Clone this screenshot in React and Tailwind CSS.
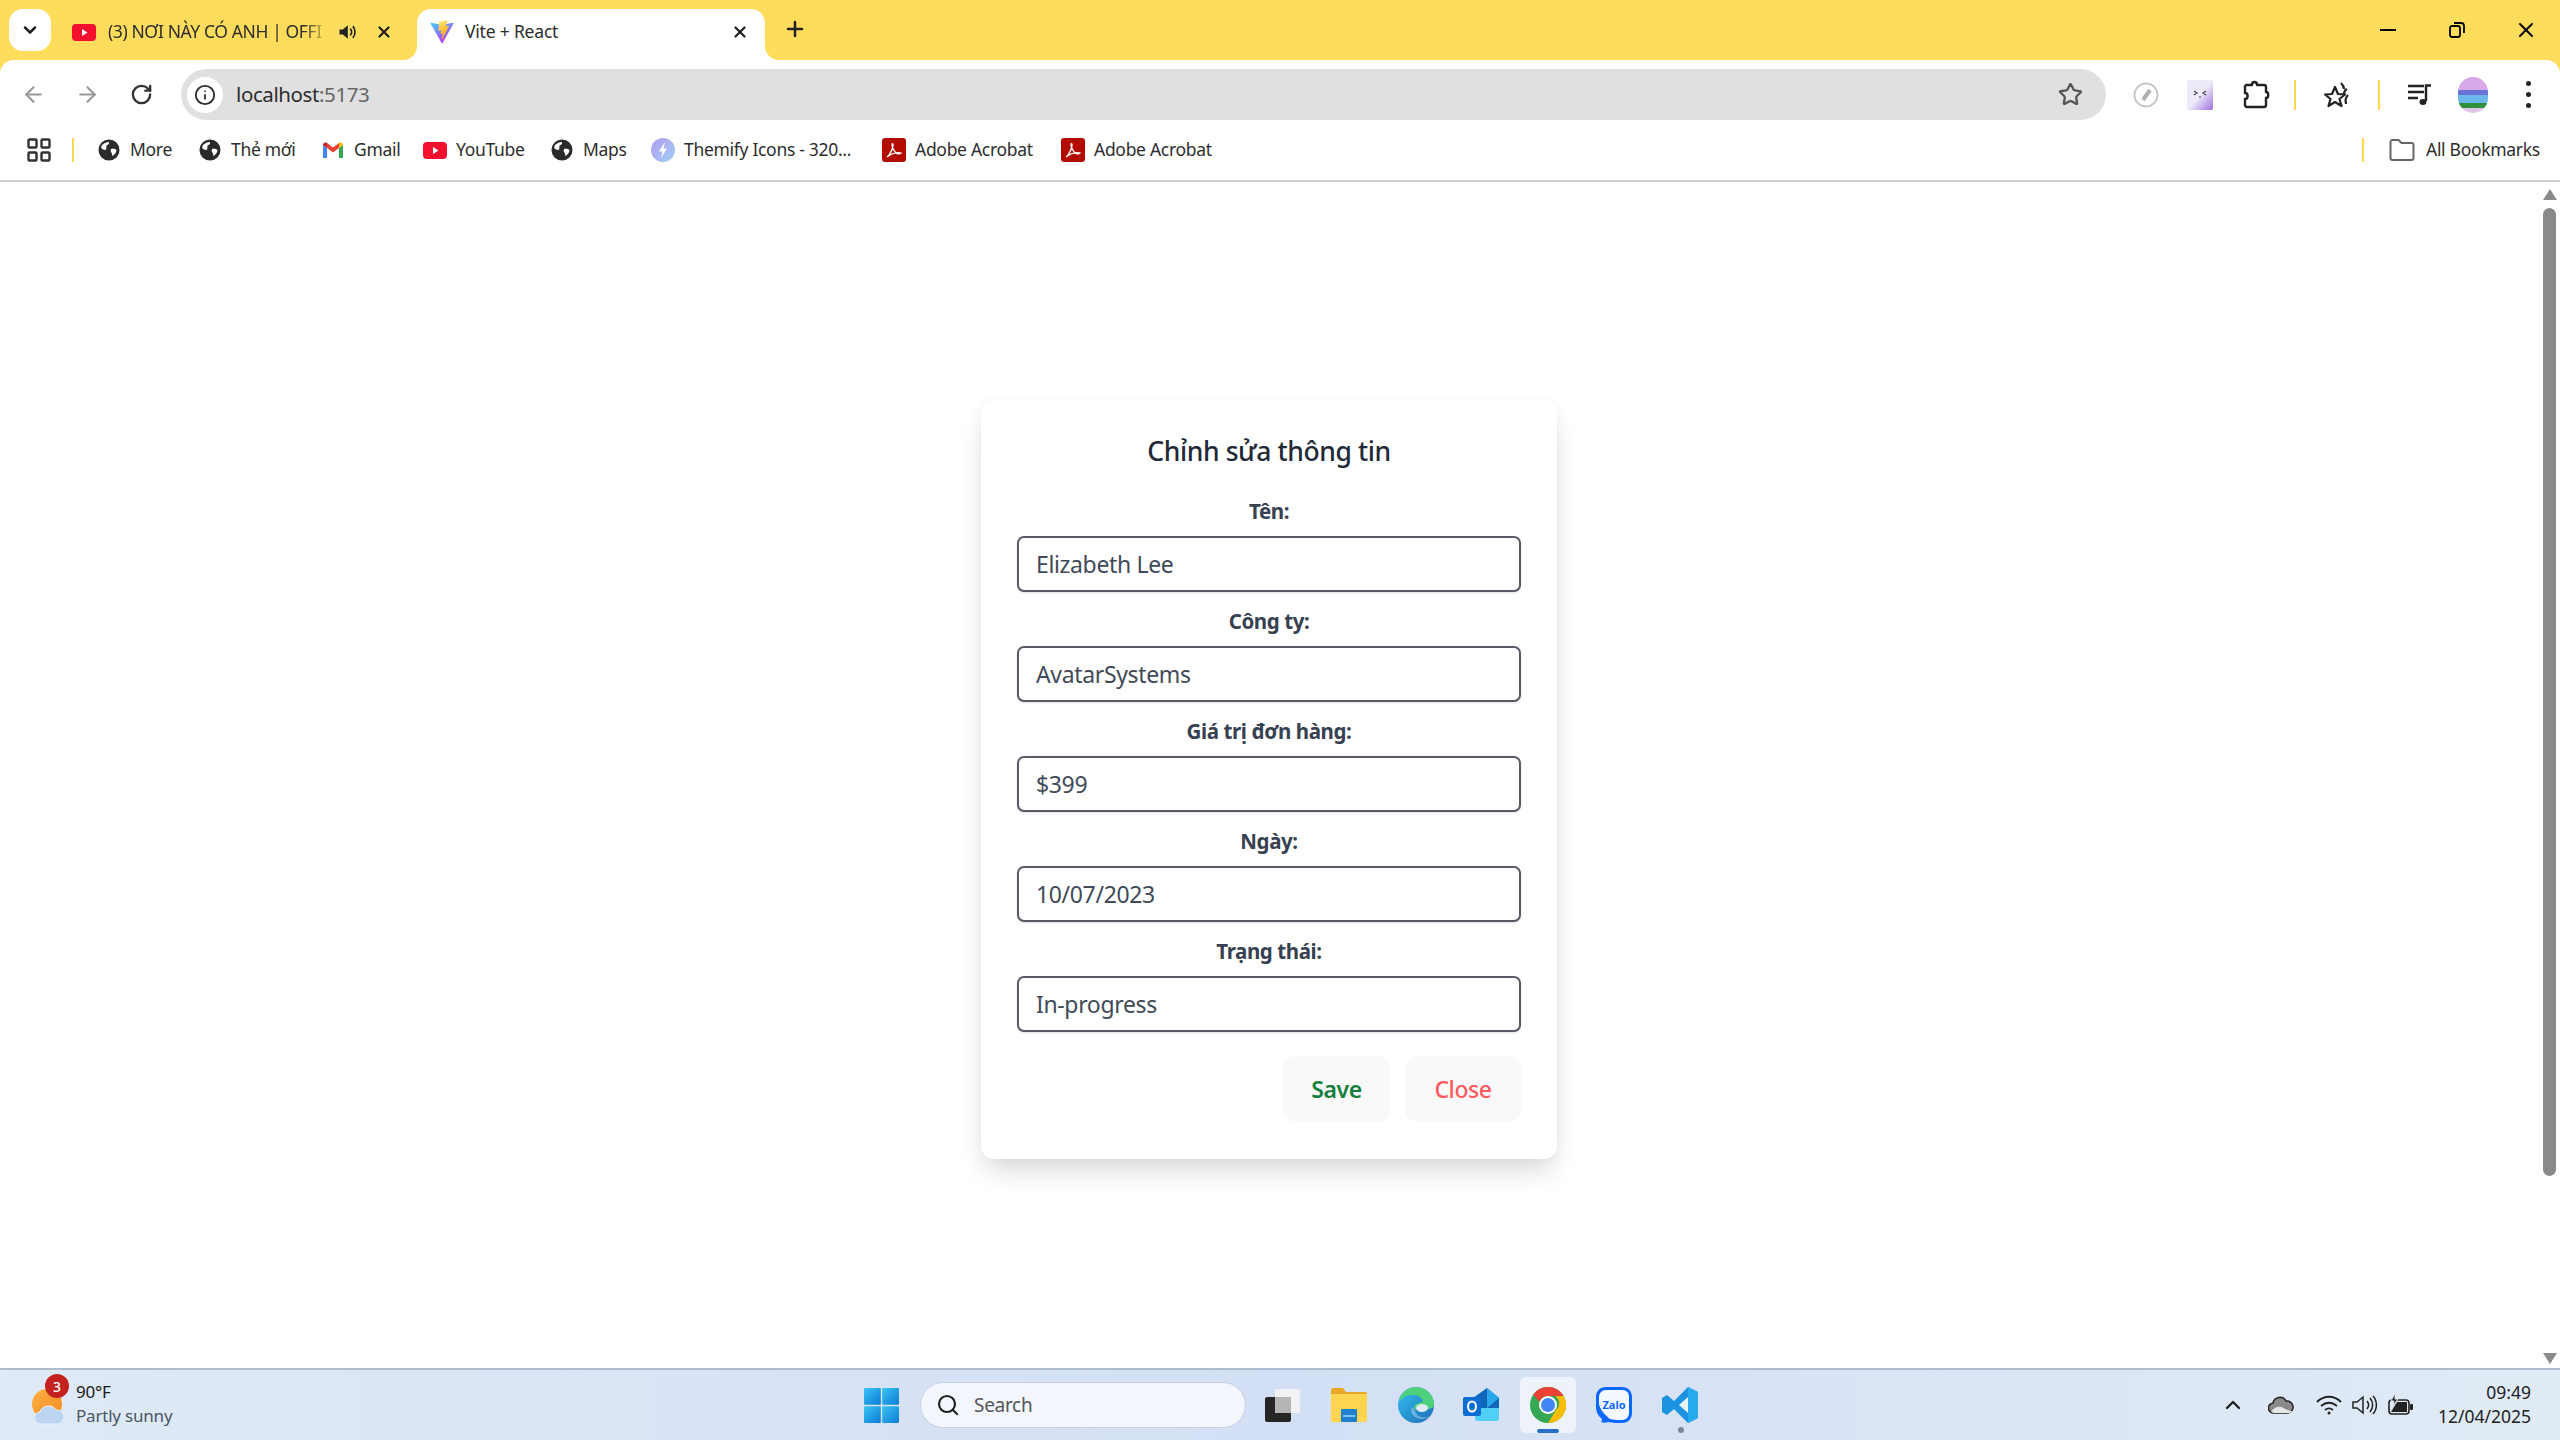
import { ArrowLeft, ArrowRight, RotateCw, Info, Star, Plus, X, ChevronDown, ChevronUp, Search } from "lucide-react";

const FONT = "font-['Noto_Sans','Open_Sans',sans-serif]";

function Globe() {
  return (
    <svg width="24" height="24" viewBox="0 0 24 24">
      <circle cx="12" cy="12" r="10.5" fill="#2b2b2b" />
      <path d="M5 7c2-2 5-3 7-3 .5 2-1 3-2.500 3.500C9 9 10 11 8.500 12 7 12.500 5 11 4 9.500z" fill="#fff" />
      <path d="M14 11c2-.5 4.500 0 5.500 1-.3 3-2 5-4 6-.5-1.500-.5-3-1.500-4-.5-1-.5-2 0-3z" fill="#fff" />
    </svg>
  );
}

function YoutubeIcon() {
  return (
    <svg width="24" height="24" viewBox="0 0 24 24">
      <rect x="0" y="4" width="24" height="17" rx="4" fill="#f40f2e" />
      <path d="M10 9l5.500 3.500L10 16z" fill="#fff" />
    </svg>
  );
}

function GmailIcon() {
  return (
    <svg width="24" height="24" viewBox="0 0 24 24">
      <path d="M2 20V7l4 3v10z" fill="#4285f4" />
      <path d="M22 20V7l-4 3v10z" fill="#34a853" />
      <path d="M6 10V5l6 4.500L18 5v5l-6 4.500z" fill="#ea4335" />
      <path d="M2 7c0-2 2-3 4-2v5z" fill="#c5221f" />
      <path d="M22 7c0-2-2-3-4-2v5z" fill="#fbbc04" />
    </svg>
  );
}

function ThemifyIcon() {
  return (
    <svg width="24" height="24" viewBox="0 0 24 24">
      <defs>
        <linearGradient id="themify" x1="0" y1="0" x2="1" y2="1">
          <stop offset="0" stopColor="#b59af0" />
          <stop offset="1" stopColor="#9fd0f5" />
        </linearGradient>
      </defs>
      <circle cx="12" cy="12" r="12" fill="url(#themify)" />
      <path d="M14 4l-6 9.500h3.500L10 20l6-9.500h-3.500z" fill="#fff" />
    </svg>
  );
}

function AcrobatIcon() {
  return (
    <svg width="24" height="24" viewBox="0 0 24 24">
      <rect x="0" y="0" width="24" height="24" rx="3" fill="#b30b00" />
      <path d="M5 19c3-2 5-7 6-11 .3-2-.5-3-1-2-.5 2 2 7 4 9 1 1 4 1 5 0-2-1-8 0-11 2z" fill="none" stroke="#fff" strokeWidth="1.300" />
    </svg>
  );
}

function ViteIcon() {
  return (
    <svg width="24" height="24" viewBox="0 0 410 404">
      <defs>
        <linearGradient id="vitea" x1="0" y1="0" x2="0.6" y2="1">
          <stop offset="0" stopColor="#41d1ff" />
          <stop offset="1" stopColor="#bd34fe" />
        </linearGradient>
        <linearGradient id="viteb" x1="0" y1="0" x2="0.3" y2="1">
          <stop offset="0" stopColor="#ffea83" />
          <stop offset="1" stopColor="#ffa800" />
        </linearGradient>
      </defs>
      <path d="M399.600 59.500L215.900 388.200c-3.800 6.800-13.500 6.800-17.400.1L11.200 59.500c-4.200-7.300 2.100-16.200 10.400-14.700l183.900 32.900c1.200.2 2.400.2 3.500 0l180-32.800c8.300-1.500 14.700 7.300 10.600 14.600z" fill="url(#vitea)" />
      <path d="M292.900 1.600L156.800 28.300c-2.200.4-3.900 2.300-4 4.600l-8.400 141.500c-.2 3.300 2.900 5.900 6.100 5.200l37.900-8.800c3.500-.8 6.700 2.300 6 5.900l-11.300 55.200c-.8 3.700 2.700 6.900 6.300 5.800l23.400-7.100c3.600-1.100 7.100 2.100 6.300 5.800l-17.900 86.600c-1.100 5.400 6.100 8.400 9.100 3.700l2-3.100 110.800-221.100c1.900-3.700-1.300-7.900-5.400-7.100l-39 7.500c-3.700.7-6.800-2.700-5.800-6.300l25.500-88.300c1-3.700-2.200-7.100-5.900-6.400z" fill="url(#viteb)" />
    </svg>
  );
}

function Bookmark({ icon, label, width }) {
  return (
    <div className={`flex items-center gap-[9px] shrink-0 ${width}`}>
      <div className="w-[24px] h-[24px] flex items-center justify-center shrink-0">{icon}</div>
      <span className="-mt-[2px] text-[17.500px] tracking-[-0.3px] text-[#2d2d2d] whitespace-nowrap">{label}</span>
    </div>
  );
}

function Field({ label, value }) {
  return (
    <div className="mt-[13px]">
      <label className="block h-[32px] leading-[32px] text-center text-[20.500px] font-bold text-[#374151] tracking-[-0.4px]">{label}</label>
      <input
        readOnly
        value={value}
        className="mt-[9px] block w-full h-[56px] pl-[17px] pr-3 border-2 border-[#565b66] rounded-[7px] bg-white shadow-sm text-[23px] tracking-[-0.35px] text-[#414a58] outline-none"
      />
    </div>
  );
}

function Slot({ className, children }) {
  return <div className={`flex items-center justify-center shrink-0 ${className}`}>{children}</div>;
}

function TabStrip() {
  return (
    <div className="h-[60px] flex items-end pl-[9px] relative">
      <div className="w-[42px] h-[42px] mb-[9px] rounded-[14px] bg-white flex items-center justify-center">
        <ChevronDown size={20} strokeWidth={3} className="text-[#222]" />
      </div>
      <div className="w-[366px] h-[51px] pl-[21px] pb-[6px] flex items-center">
        <YoutubeIcon />
        <span className="ml-[12px] w-[222px] overflow-hidden whitespace-nowrap text-[17.500px] tracking-[-0.4px] text-[#2d2d2d] [mask-image:linear-gradient(to_right,black_88%,transparent)]">(3) NƠI NÀY CÓ ANH | OFFI</span>
        <svg className="ml-[7px] shrink-0" width="20" height="20" viewBox="0 0 24 24">
          <path d="M3 9v6h4l6 5V4L7 9z" fill="#222" />
          <path d="M16 8c2 2 2 6 0 8M19 5c3.500 4 3.500 10 0 14" fill="none" stroke="#222" strokeWidth="2" />
        </svg>
        <X className="ml-[18px] shrink-0 text-[#222]" size={18} strokeWidth={3} />
      </div>
      <div className="relative w-[348px] h-[51px] bg-white rounded-t-[14px] pl-[13px] pr-[16px] pb-[6px] flex items-center">
        <div className="absolute -left-[14px] bottom-0 w-[14px] h-[14px] bg-white">
          <div className="w-full h-full bg-[#ffdd5c] rounded-br-[14px]" />
        </div>
        <div className="absolute -right-[14px] bottom-0 w-[14px] h-[14px] bg-white">
          <div className="w-full h-full bg-[#ffdd5c] rounded-bl-[14px]" />
        </div>
        <ViteIcon />
        <span className="ml-[11px] text-[17.500px] tracking-[-0.2px] text-[#2d2d2d]">Vite + React</span>
        <X className="ml-auto text-[#222]" size={18} strokeWidth={3} />
      </div>
      <Plus className="ml-[18px] mb-[19px] text-[#222]" size={24} strokeWidth={2.500} />
      <div className="ml-auto h-[60px] flex items-start pt-[18px]">
        <Slot className="w-[24px] h-[24px]"><div className="w-[16px] h-[2.500px] bg-black" /></Slot>
        <Slot className="w-[24px] h-[24px] ml-[45px]">
          <svg width="18" height="18" viewBox="0 0 18 18" fill="none" stroke="#000" strokeWidth="1.800">
            <rect x="2" y="5" width="10" height="11" rx="2" />
            <path d="M6 2h7a3 3 0 0 1 3 3v7" />
          </svg>
        </Slot>
        <Slot className="w-[24px] h-[24px] ml-[45px] mr-[22px]">
          <X size={24} strokeWidth={2} className="text-black" />
        </Slot>
      </div>
    </div>
  );
}

function Toolbar() {
  return (
    <div className="h-[60px] bg-white rounded-t-[14px] pt-[9px] pl-[15px] flex items-center">
      <Slot className="w-[36px] h-[36px]"><ArrowLeft size={25} strokeWidth={2} className="text-[#9a9a9a]" /></Slot>
      <Slot className="w-[36px] h-[36px] ml-[18px]"><ArrowRight size={25} strokeWidth={2} className="text-[#9a9a9a]" /></Slot>
      <Slot className="w-[36px] h-[36px] ml-[18px]"><RotateCw size={23} strokeWidth={2.500} className="text-[#333]" /></Slot>
      <div className="ml-[22px] w-[1925px] h-[51px] rounded-full bg-[#e0e0e0] pl-[6px] pr-[23px] flex items-center">
        <div className="w-[36px] h-[36px] rounded-full bg-white flex items-center justify-center">
          <Info size={22} strokeWidth={2} className="text-[#2d2d2d]" />
        </div>
        <span className="ml-[13px] text-[20.500px] tracking-[-0.4px] text-[#2d2d2d]">localhost<span className="text-[#666]">:5173</span></span>
        <Star size={25} strokeWidth={2.200} className="ml-auto text-[#555]" />
      </div>
      <Slot className="w-[36px] h-[36px] ml-[22px]">
        <svg width="26" height="26" viewBox="0 0 26 26">
          <circle cx="13" cy="13" r="11.500" fill="none" stroke="#c4c4c4" strokeWidth="1.800" />
          <path d="M17 8l-7 10" stroke="#b0b0b0" strokeWidth="4" />
        </svg>
      </Slot>
      <Slot className="w-[36px] h-[36px] ml-[18px]">
        <svg width="26" height="30" viewBox="0 0 26 30">
          <defs>
            <linearGradient id="face" x1="0" y1="0" x2="1" y2="1">
              <stop offset="0.500" stopColor="#eeeaf8" />
              <stop offset="1" stopColor="#9f6fe0" />
            </linearGradient>
          </defs>
          <rect width="26" height="30" rx="2" fill="url(#face)" />
          <path d="M7 11l3 2-3 2M19 11l-3 2 3 2M12 17h2" fill="none" stroke="#444" strokeWidth="1.200" />
        </svg>
      </Slot>
      <Slot className="w-[36px] h-[36px] ml-[20px]">
        <svg width="28" height="32" viewBox="0 0 28 32" fill="none" stroke="#222" strokeWidth="2.400" strokeLinejoin="round">
          <path d="M4 6h6c0-4 5-4 5 0h7a2 2 0 0 1 2 2v5c3 0 3 6 0 6v7a2 2 0 0 1-2 2H5a2 2 0 0 1-2-2v-6c3.500 0 3.500-6 0-6V7z" />
        </svg>
      </Slot>
      <div className="ml-[20px] w-[2px] h-[30px] bg-[#ffd84d]" />
      <Slot className="w-[36px] h-[36px] ml-[25px]">
        <svg width="30" height="30" viewBox="0 0 30 30" fill="none" stroke="#222" strokeWidth="2.200" strokeLinejoin="round">
          <path d="M11 7l3 7 7 .5-5.500 4.500 2 7L11 22l-6.500 4 2-7L1 14.500 8 14z" />
          <path d="M17 3c2 2 3 4 3 6M23 9c-2 1-3 3-3 5M24 15c-2 2-3 5-2 9" />
        </svg>
      </Slot>
      <div className="ml-[21px] w-[2px] h-[30px] bg-[#ffd84d]" />
      <Slot className="w-[36px] h-[36px] ml-[22px]">
        <svg width="24" height="22" viewBox="0 0 24 22" fill="none" stroke="#222" strokeWidth="2.400">
          <path d="M0 2h16M0 8h16M0 14h10" />
          <path d="M18 17V1.500h5" />
          <ellipse cx="15" cy="18" rx="3.500" ry="3" fill="#222" stroke="none" />
        </svg>
      </Slot>
      <Slot className="w-[36px] h-[36px] ml-[17px]">
        <div className="w-[30px] h-[36px] rounded-full overflow-hidden flex flex-col">
          <div className="h-[13px] bg-[#d8a8e8]" />
          <div className="h-[5px] bg-[#6a72d8]" />
          <div className="h-[8px] bg-[#6cb8ec]" />
          <div className="h-[5px] bg-[#2f8f3a]" />
          <div className="h-[5px] bg-[#e2c4e8]" />
        </div>
      </Slot>
      <Slot className="w-[36px] h-[36px] ml-[19px]">
        <div className="flex flex-col gap-[6px]">
          <div className="w-[5px] h-[5px] rounded-full bg-[#222]" />
          <div className="w-[5px] h-[5px] rounded-full bg-[#222]" />
          <div className="w-[5px] h-[5px] rounded-full bg-[#222]" />
        </div>
      </Slot>
    </div>
  );
}

function BookmarksBar() {
  return (
    <div className="h-[62px] bg-white border-b-2 border-[#cfcfcf] pl-[27px] flex items-center">
      <svg width="24" height="24" viewBox="0 0 24 24" fill="none" stroke="#333" strokeWidth="2.400">
        <rect x="1.500" y="1.500" width="8" height="8" rx="1" />
        <rect x="14.500" y="1.500" width="8" height="8" rx="1" />
        <rect x="1.500" y="14.500" width="8" height="8" rx="1" />
        <rect x="14.500" y="14.500" width="8" height="8" rx="1" />
      </svg>
      <div className="ml-[21px] mr-[23px] w-[2px] h-[24px] bg-[#ffd84d]" />
      <Bookmark icon={<Globe />} label="More" width="w-[101px]" />
      <Bookmark icon={<Globe />} label="Thẻ mới" width="w-[123px]" />
      <Bookmark icon={<GmailIcon />} label="Gmail" width="w-[102px]" />
      <Bookmark icon={<YoutubeIcon />} label="YouTube" width="w-[127px]" />
      <Bookmark icon={<Globe />} label="Maps" width="w-[101px]" />
      <Bookmark icon={<ThemifyIcon />} label="Themify Icons - 320..." width="w-[231px]" />
      <Bookmark icon={<AcrobatIcon />} label="Adobe Acrobat" width="w-[179px]" />
      <Bookmark icon={<AcrobatIcon />} label="Adobe Acrobat" width="w-[160px]" />
      <div className="ml-auto w-[2px] h-[24px] bg-[#ffd84d]" />
      <svg className="ml-[25px]" width="26" height="22" viewBox="0 0 26 22" fill="none" stroke="#666" strokeWidth="2">
        <path d="M1.500 3a2 2 0 0 1 2-2h6l3 3h10a2 2 0 0 1 2 2v13a2 2 0 0 1-2 2h-19a2 2 0 0 1-2-2z" />
      </svg>
      <span className="-mt-[2px] ml-[11px] mr-[22px] text-[17.500px] tracking-[-0.3px] text-[#2d2d2d] w-[112px] whitespace-nowrap">All Bookmarks</span>
    </div>
  );
}

function EditCard() {
  return (
    <div className="w-[576px] h-[759px] bg-white rounded-[13px] shadow-[0_16px_26px_-4px_rgba(0,0,0,0.14),0_0_12px_rgba(0,0,0,0.04)] px-[36px] pt-[31px]">
      <h2 className="h-[40px] mb-[24px] leading-[40px] text-center text-[26.500px] font-medium tracking-[-0.4px] text-[#1f2937]">Chỉnh sửa thông tin</h2>
      <Field label="Tên:" value="Elizabeth Lee" />
      <Field label="Công ty:" value="AvatarSystems" />
      <Field label="Giá trị đơn hàng:" value="$399" />
      <Field label="Ngày:" value="10/07/2023" />
      <Field label="Trạng thái:" value="In-progress" />
      <div className="mt-[24px] flex justify-end gap-[15px]">
        <button className="w-[107px] h-[66px] rounded-[13px] bg-[#f9f9f9] text-[23px] font-semibold tracking-[-0.4px] text-[#15803d]">Save</button>
        <button className="w-[116px] h-[66px] rounded-[13px] bg-[#f9f9f9] text-[23px] font-medium tracking-[-0.4px] text-[#ff5a5f]">Close</button>
      </div>
    </div>
  );
}

function Scrollbar() {
  return (
    <div className="w-[19px] bg-white flex flex-col items-center pr-[2px]">
      <div className="mt-[7px] w-0 h-0 border-l-[7px] border-r-[7px] border-b-[11px] border-l-transparent border-r-transparent border-b-[#8a8a8a]" />
      <div className="mt-[8px] w-[13px] h-[968px] rounded-full bg-[#8a8a8a]" />
      <div className="mt-auto mb-[4px] w-0 h-0 border-l-[7px] border-r-[7px] border-t-[11px] border-l-transparent border-r-transparent border-t-[#8a8a8a]" />
    </div>
  );
}

function Taskbar() {
  return (
    <div className="h-[72px] border-t-2 border-[#aebccd] bg-gradient-to-r from-[#dfeaf6] via-[#d3dff4] to-[#e0ebf6] flex items-center">
      <div className="w-[864px] pl-[32px] flex items-center shrink-0">
        <div className="relative w-[32px] h-[40px]">
          <div className="absolute left-0 top-[4px] w-[30px] h-[30px] rounded-full bg-gradient-to-br from-[#fbb040] to-[#f58a1f]" />
          <svg className="absolute left-[2px] top-[18px]" width="30" height="22" viewBox="0 0 30 22">
            <path d="M7 21a6 6 0 0 1-1-12 9 9 0 0 1 16-2 7 7 0 0 1 2 14z" fill="#bcd6f2" stroke="#eaf3fc" strokeWidth="1" />
          </svg>
          <div className="absolute left-[13px] -top-[11px] w-[24px] h-[24px] rounded-full bg-[#c42121] text-white text-[14px] font-medium flex items-center justify-center">3</div>
        </div>
        <div className="ml-[12px] -mt-[2px] flex flex-col text-[17px] leading-[24px] tracking-[-0.2px]">
          <span className="text-[#1a1a1a]">90°F</span>
          <span className="text-[#4b5563]">Partly sunny</span>
        </div>
      </div>
      <svg className="shrink-0" width="35" height="35" viewBox="0 0 35 35">
        <defs>
          <linearGradient id="win" x1="0" y1="0" x2="1" y2="1">
            <stop offset="0" stopColor="#3cc4f5" />
            <stop offset="1" stopColor="#0b7bd6" />
          </linearGradient>
        </defs>
        <rect width="16.800" height="16.800" rx="1" fill="url(#win)" />
        <rect x="18.200" width="16.800" height="16.800" rx="1" fill="url(#win)" />
        <rect y="18.200" width="16.800" height="16.800" rx="1" fill="url(#win)" />
        <rect x="18.200" y="18.200" width="16.800" height="16.800" rx="1" fill="url(#win)" />
      </svg>
      <div className="ml-[21px] w-[326px] h-[46px] rounded-full bg-[#f3f6fd] border border-[#c5cfe0] pl-[15px] flex items-center shrink-0">
        <Search size={24} strokeWidth={2.200} className="text-[#222]" />
        <span className="ml-[14px] text-[19px] tracking-[-0.3px] text-[#555]">Search</span>
      </div>
      <Slot className="w-[44px] h-[44px] ml-[15px]">
        <svg width="36" height="36" viewBox="0 0 36 36">
          <rect x="10" y="2" width="25" height="24" rx="2" fill="#f2f2f2" />
          <rect x="0" y="10" width="26" height="25" rx="2" fill="#262626" />
          <rect x="10" y="10" width="16" height="16" fill="#b5b5b5" />
        </svg>
      </Slot>
      <Slot className="w-[44px] h-[44px] ml-[22px]">
        <svg width="36" height="34" viewBox="0 0 36 34">
          <path d="M0 2a2 2 0 0 1 2-2h10l3 4h19a2 2 0 0 1 2 2v4H0z" fill="#e9a825" />
          <path d="M0 6h36v26a2 2 0 0 1-2 2H2a2 2 0 0 1-2-2z" fill="#ffd54f" />
          <rect x="10" y="21" width="16" height="13" rx="1" fill="#1f7fd1" />
          <rect x="12" y="27" width="12" height="2" fill="#7cc4f5" />
        </svg>
      </Slot>
      <Slot className="w-[44px] h-[44px] ml-[23px]">
        <svg width="36" height="36" viewBox="0 0 36 36">
          <defs>
            <linearGradient id="edge" x1="0" y1="0" x2="1" y2="1">
              <stop offset="0" stopColor="#35c1f1" />
              <stop offset="1" stopColor="#1b6cb5" />
            </linearGradient>
          </defs>
          <circle cx="18" cy="18" r="18" fill="url(#edge)" />
          <path d="M18 0c10 0 18 8 18 17 0 4-3 5-7 5H16c0-5 5-7 9-7-1-5-6-8-13-7C6 9 3 13 1 14 3 6 10 0 18 0z" fill="#4fd07a" />
          <path d="M14 20c-3 6 2 12 10 12 3 0 6-1 8-3-5 2-12 2-14-3-1-2-1-4-4-6z" fill="#e6f3fb" opacity=".35" />
          <ellipse cx="24" cy="21" rx="6" ry="4" fill="#dfe8f5" />
        </svg>
      </Slot>
      <Slot className="w-[44px] h-[44px] ml-[21px]">
        <svg width="36" height="34" viewBox="0 0 36 34">
          <path d="M10 10L24 0l12 10v14H10z" fill="#1066b8" />
          <path d="M12 20h24v10a3 3 0 0 1-3 3H15a3 3 0 0 1-3-3z" fill="#4fd0f4" />
          <path d="M24 0l12 10-12 10z" fill="#28a8ea" />
          <rect x="0" y="9" width="18" height="19" rx="2" fill="#0a6fd0" />
          <ellipse cx="9" cy="18.500" rx="4" ry="5" fill="none" stroke="#fff" strokeWidth="2" />
        </svg>
      </Slot>
      <div className="ml-[17px] relative w-[56px] h-[56px] rounded-[6px] bg-[#eef3fb] flex items-center justify-center shrink-0">
        <svg width="36" height="36" viewBox="0 0 36 36">
          <circle cx="18" cy="18" r="18" fill="#34a853" />
          <path d="M18 0a18 18 0 0 1 15.600 9H18a9 9 0 0 0-8.500 6L3.200 7.500A18 18 0 0 1 18 0z" fill="#ea4335" />
          <path d="M33.600 9A18 18 0 0 1 18 36l8-13a9 9 0 0 0-.5-14z" fill="#fbbc04" />
          <circle cx="18" cy="18" r="9" fill="#fff" />
          <circle cx="18" cy="18" r="7" fill="#4285f4" />
        </svg>
        <div className="absolute left-[17px] bottom-0 w-[22px] h-[4px] rounded-full bg-[#2a6fc9]" />
      </div>
      <Slot className="w-[44px] h-[44px] ml-[16px]">
        <svg width="36" height="36" viewBox="0 0 36 36">
          <path d="M10 0h16c6 0 10 4 10 10v16c0 6-4 10-10 10-5 0-9 0-14-1-2 1-5 1-7 0 1-1 1-2 1-3-4-3-6-7-6-12V10C0 4 4 0 10 0z" fill="#0a68ff" />
          <path d="M10 3h16c5 0 7 3 7 7v16c0 4-3 7-7 7-4 0-8 0-12-1-4-3-11-10-11-16V10c0-4 3-7 7-7z" fill="#f4f8ff" />
          <text x="18" y="22" textAnchor="middle" fontSize="11" fontWeight="700" fill="#0a68ff">Zalo</text>
        </svg>
      </Slot>
      <Slot className="relative w-[44px] h-[44px] ml-[22px]">
        <svg width="36" height="36" viewBox="0 0 36 36">
          <path d="M26 0l10 5v26l-10 5-14-14-7 6-5-3V11l5-3 7 6z" fill="#1c93e0" />
          <path d="M26 10l-9 8 9 8z" fill="#e8f2fb" />
          <path d="M26 0l10 5v26l-10 5z" fill="#27a9f0" />
        </svg>
        <div className="absolute left-[20px] -bottom-[6px] w-[6px] h-[6px] rounded-full bg-[#7d8896]" />
      </Slot>
      <ChevronUp className="ml-[519px] shrink-0 text-[#222]" size={24} strokeWidth={2.400} />
      <Slot className="w-[30px] h-[24px] ml-[21px]">
        <svg width="26" height="18" viewBox="0 0 26 18">
          <path d="M6 17a5 5 0 0 1-1-10 7 7 0 0 1 13-2 6 6 0 0 1 2 12z" fill="#8a8a8a" stroke="#222" strokeWidth="1.500" />
          <path d="M3 16c3-5 9-7 14-3 3 1 5 2 7 2-1 2-3 2-4 2H6z" fill="#e6e6e6" />
        </svg>
      </Slot>
      <Slot className="w-[28px] h-[24px] ml-[19px]">
        <svg width="26" height="20" viewBox="0 0 26 20" fill="none" stroke="#222" strokeWidth="1.800">
          <path d="M1 7c7-7 17-7 24 0M5 11c5-4 11-4 16 0M9 15c2.500-2 5.500-2 8 0" />
          <circle cx="13" cy="18" r="1.500" fill="#222" stroke="none" />
        </svg>
      </Slot>
      <Slot className="w-[28px] h-[24px] ml-[8px]">
        <svg width="26" height="22" viewBox="0 0 26 22" fill="none" stroke="#222" strokeWidth="1.500">
          <path d="M1 8h4l6-5v16l-6-5H1z" />
          <path d="M15 7c2 2.500 2 5.500 0 8M18 4c3.500 4 3.500 10 0 14M21 2c4.500 5 4.500 13 0 18" />
        </svg>
      </Slot>
      <Slot className="w-[28px] h-[24px] ml-[8px]">
        <svg width="26" height="24" viewBox="0 0 26 24">
          <rect x="1" y="7" width="20" height="14" rx="3" fill="none" stroke="#222" strokeWidth="1.600" />
          <path d="M3 19l6-10h10v10z" fill="#222" />
          <rect x="22" y="11" width="3" height="6" rx="1" fill="#222" />
          <path d="M7 0L3 8h3l-1 5 5-7H7z" fill="#222" stroke="#e0ebf6" strokeWidth="1" />
        </svg>
      </Slot>
      <div className="ml-auto mr-[29px] -mt-[2px] flex flex-col items-end text-[17.500px] leading-[24px] text-[#222]">
        <span>09:49</span>
        <span>12/04/2025</span>
      </div>
    </div>
  );
}

export default function App() {
  return (
    <div className={`${FONT} w-[2560px] h-[1440px] flex flex-col overflow-hidden bg-[#ffdd5c]`}>
      <TabStrip />
      <Toolbar />
      <BookmarksBar />
      <div className="h-[1186px] bg-white flex">
        <div className="flex-1 flex justify-center items-start pt-[218px] pr-[3px]">
          <EditCard />
        </div>
        <Scrollbar />
      </div>
      <Taskbar />
    </div>
  );
}
